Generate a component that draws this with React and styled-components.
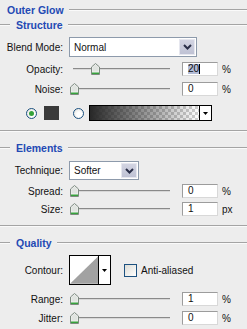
import React from "react";
import styled, { createGlobalStyle } from "styled-components";

const Global = createGlobalStyle`
  html, body { margin: 0; padding: 0; background: #ededed; }
`;

const Page = styled.div`
  width: 247px;
  height: 329px;
  overflow: hidden;
  background: #ededed;
  font-family: Tahoma, "Liberation Sans", Arial, sans-serif;
  font-size: 10px;
  color: #111;
`;

const Legend = styled.div`
  display: flex;
  align-items: center;
  height: ${(p) => p.$h}px;
  margin-top: ${(p) => p.$mt || 0}px;
`;

const Lead = styled.div`
  width: 10px;
  height: 0;
  border-top: 1px solid #a4a4a4;
  border-bottom: 1px solid #fafafa;
`;

const Title = styled.span`
  font-weight: bold;
  font-size: 10.5px;
  color: #2349b4;
  margin-left: ${(p) => p.$ml}px;
  margin-right: 5px;
  white-space: nowrap;
`;

const Rule = styled.div`
  flex: 1;
  height: 0;
  border-top: 1px solid #a4a4a4;
  border-bottom: 1px solid #fafafa;
`;

const GroupEnd = styled.div`
  height: 0;
  margin-top: ${(p) => p.$mt}px;
  border-top: 1px solid #a4a4a4;
  border-bottom: 1px solid #fafafa;
`;

const Row = styled.div`
  display: flex;
  align-items: center;
  height: ${(p) => p.$h}px;
  margin-top: ${(p) => p.$mt}px;
`;

const Label = styled.div`
  width: 63px;
  text-align: right;
  margin-right: 6px;
  white-space: nowrap;
`;

const SelectBox = styled.div`
  width: ${(p) => p.$w}px;
  height: ${(p) => p.$h}px;
  box-sizing: border-box;
  border: 1px solid #8d9aab;
  background: #fff;
  display: flex;
  align-items: center;
  padding: 1px;
`;

const SelectText = styled.div`
  flex: 1;
  padding-left: 3px;
  font-size: 10px;
`;

const ArrowBtn = styled.div`
  width: 16px;
  height: 100%;
  box-sizing: border-box;
  background: linear-gradient(#d2d4e2, #bfc2d4);
  border: 1px solid #e6e7ef;
  display: flex;
  align-items: center;
  justify-content: center;
`;

const Slider = styled.div`
  position: relative;
  width: 97px;
  height: 14px;
  margin-left: 4px;
  margin-right: 12px;
`;

const Track = styled.div`
  position: absolute;
  left: 0;
  right: 0;
  top: 6px;
  height: 0;
  border-top: 1px solid #8a8a8a;
  border-bottom: 1px solid #d8d8d8;
`;

const Thumb = styled.svg`
  position: absolute;
  top: 1px;
`;

const Field = styled.div`
  width: 36px;
  height: 14px;
  box-sizing: border-box;
  border: 1px solid #9c9c9c;
  border-right-color: #d8d8d8;
  border-bottom-color: #d8d8d8;
  background: #fff;
  padding-left: 5px;
  display: flex;
  align-items: center;
  line-height: 1;
`;

const Sel = styled.span`
  background: #b3bcd6;
  border-right: 1px solid #000;
`;

const Unit = styled.div`
  margin-left: 4px;
`;

const Radio = styled.div`
  width: 11px;
  height: 11px;
  box-sizing: border-box;
  border-radius: 50%;
  border: 1px solid #1c5180;
  background: radial-gradient(circle at 60% 60%, #fff 30%, #dcdcd6 100%);
  margin-left: ${(p) => p.$ml}px;
  display: flex;
  align-items: center;
  justify-content: center;
  &::after {
    content: "";
    display: ${(p) => (p.$on ? "block" : "none")};
    width: 5px;
    height: 5px;
    border-radius: 50%;
    background: #35a23a;
  }
`;

const Swatch = styled.div`
  width: 15px;
  height: 14px;
  background: #3a3a3a;
  margin-left: 7px;
`;

const GradientPicker = styled.div`
  width: 123px;
  height: 16px;
  box-sizing: border-box;
  margin-left: 5px;
  border: 1px solid #000;
  display: flex;
`;

const GradientFill = styled.div`
  flex: 1;
  background:
    linear-gradient(to right, rgba(40, 40, 40, 1), rgba(40, 40, 40, 0)),
    conic-gradient(#cfcfcf 25%, #fff 0 50%, #cfcfcf 0 75%, #fff 0) 0 0 / 6px 6px;
`;

const DropPart = styled.div`
  width: 11px;
  border-left: 1px solid #000;
  background: #fff;
  display: flex;
  align-items: center;
  justify-content: center;
`;

const ContourBox = styled.div`
  width: 42px;
  height: 30px;
  box-sizing: border-box;
  border: 1px solid #000;
  display: flex;
  background: #fff;
`;

const ContourPreview = styled.svg`
  display: block;
`;

const Check = styled.div`
  width: 13px;
  height: 13px;
  box-sizing: border-box;
  border: 1px solid #1c5180;
  background: linear-gradient(135deg, #dcdcd6, #fff);
  margin-left: 13px;
  margin-right: 4px;
`;

const Tri = () => (
  <svg width="5" height="3" viewBox="0 0 5 3">
    <path d="M0 0H5L2.5 3Z" fill="#000" />
  </svg>
);

const Chevron = () => (
  <svg width="9" height="6" viewBox="0 0 9 6">
    <path d="M1 1L4.5 4.5L8 1" fill="none" stroke="#2a2f48" strokeWidth="2" />
  </svg>
);

const SliderCtl = ({ pos }) => (
  <Slider>
    <Track />
    <Thumb width="9" height="12" viewBox="0 0 9 12" style={{ left: pos - 4 }}>
      <path d="M4.5 0.5L8.5 4V11.5H0.5V4Z" fill="#f2f2f2" stroke="#7d8a80" />
      <path d="M1 9.5H8V11H1Z" fill="#36a23c" />
      <path d="M4.5 1.5L7.5 4.2V8.5H1.5V4.2Z" fill="#e0e4e0" />
    </Thumb>
  </Slider>
);

const SliderRow = ({ label, pos, value, unit, mt, selected }) => (
  <Row $h={14} $mt={mt}>
    <Label>{label}</Label>
    <SliderCtl pos={pos} />
    <Field>{selected ? <Sel>{value}</Sel> : value}</Field>
    <Unit>{unit}</Unit>
  </Row>
);

const GroupLegend = ({ children, mt }) => (
  <Legend $h={12} $mt={mt}>
    <Lead />
    <Title $ml={6}>{children}</Title>
    <Rule />
  </Legend>
);

export default function App() {
  return (
    <Page>
      <Global />
      <Legend $h={19}>
        <Title $ml={7}>Outer Glow</Title>
        <Rule />
      </Legend>

      <GroupLegend>Structure</GroupLegend>
      <Row $h={20} $mt={6}>
        <Label>Blend Mode:</Label>
        <SelectBox $w={128} $h={20}>
          <SelectText>Normal</SelectText>
          <ArrowBtn>
            <Chevron />
          </ArrowBtn>
        </SelectBox>
      </Row>
      <SliderRow label="Opacity:" pos={22} value="20" unit="%" mt={5} selected />
      <SliderRow label="Noise:" pos={1} value="0" unit="%" mt={6} />
      <Row $h={16} $mt={9}>
        <Radio $ml={26} $on />
        <Swatch />
        <Radio $ml={14} />
        <GradientPicker>
          <GradientFill />
          <DropPart>
            <Tri />
          </DropPart>
        </GradientPicker>
      </Row>
      <GroupEnd $mt={9} />

      <GroupLegend mt={10}>Elements</GroupLegend>
      <Row $h={19} $mt={7}>
        <Label>Technique:</Label>
        <SelectBox $w={70} $h={19}>
          <SelectText>Softer</SelectText>
          <ArrowBtn>
            <Chevron />
          </ArrowBtn>
        </SelectBox>
      </Row>
      <SliderRow label="Spread:" pos={1} value="0" unit="%" mt={4} />
      <SliderRow label="Size:" pos={1} value="1" unit="px" mt={4} />
      <GroupEnd $mt={9} />

      <GroupLegend mt={10}>Quality</GroupLegend>
      <Row $h={30} $mt={6}>
        <Label>Contour:</Label>
        <ContourBox>
          <ContourPreview width="29" height="28" viewBox="0 0 29 28">
            <path d="M0 28L29 0V28Z" fill="#a2a2a2" />
          </ContourPreview>
          <DropPart>
            <Tri />
          </DropPart>
        </ContourBox>
        <Check />
        <span>Anti-aliased</span>
      </Row>
      <SliderRow label="Range:" pos={1} value="1" unit="%" mt={7} />
      <SliderRow label="Jitter:" pos={1} value="0" unit="%" mt={5} />
    </Page>
  );
}
